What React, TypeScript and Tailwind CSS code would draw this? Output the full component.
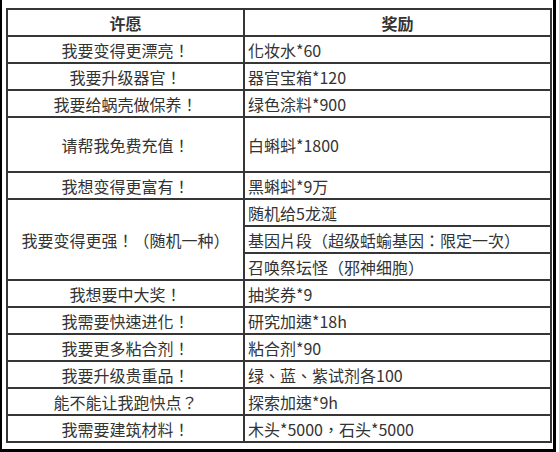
const rows: { wish: string; rewards: string[]; tall?: boolean }[] = [
  { wish: "我要变得更漂亮！", rewards: ["化妆水*60"] },
  { wish: "我要升级器官！", rewards: ["器官宝箱*120"] },
  { wish: "我要给蜗壳做保养！", rewards: ["绿色涂料*900"] },
  { wish: "请帮我免费充值！", rewards: ["白蝌蚪*1800"], tall: true },
  { wish: "我想变得更富有！", rewards: ["黑蝌蚪*9万"] },
  {
    wish: "我要变得更强！（随机一种）",
    rewards: ["随机给5龙涎", "基因片段（超级蛞蝓基因：限定一次）", "召唤祭坛怪（邪神细胞）"],
  },
  { wish: "我想要中大奖！", rewards: ["抽奖券*9"] },
  { wish: "我需要快速进化！", rewards: ["研究加速*18h"] },
  { wish: "我要更多粘合剂！", rewards: ["粘合剂*90"] },
  { wish: "我要升级贵重品！", rewards: ["绿、蓝、紫试剂各100"] },
  { wish: "能不能让我跑快点？", rewards: ["探索加速*9h"] },
  { wish: "我需要建筑材料！", rewards: ["木头*5000，石头*5000"] },
];

const cell = "border-2 border-[#363636] p-0 leading-none";

export default function App() {
  return (
    <div className="w-[559px] h-[452px] bg-white">
      <div
        className="w-[556px] h-[452px] border-l-2 border-b-[3px] border-r-[3px] border-black pl-[4px] pt-[8px]"
        style={{ fontFamily: '"Noto Sans CJK TC", "Noto Sans CJK SC", "Noto Sans", sans-serif' }}
      >
        <table className="border-collapse w-[546px] table-fixed text-[16px] text-[#333]">
          <colgroup>
            <col className="w-[237px]" />
            <col className="w-[307px]" />
          </colgroup>
          <thead>
            <tr className="h-[27px]">
              <th className={`${cell} text-center font-bold`}>许愿</th>
              <th className={`${cell} text-center font-bold`}>奖励</th>
            </tr>
          </thead>
          <tbody>
            {rows.map((r) =>
              r.rewards.map((rw, i) => (
                <tr key={r.wish + i} className={r.tall ? "h-[55px]" : "h-[27px]"}>
                  {i === 0 && (
                    <td rowSpan={r.rewards.length} className={`${cell} text-center`}>
                      {r.wish}
                    </td>
                  )}
                  <td className={`${cell} text-left pl-[3px] whitespace-nowrap`}>{rw}</td>
                </tr>
              ))
            )}
          </tbody>
        </table>
      </div>
    </div>
  );
}
